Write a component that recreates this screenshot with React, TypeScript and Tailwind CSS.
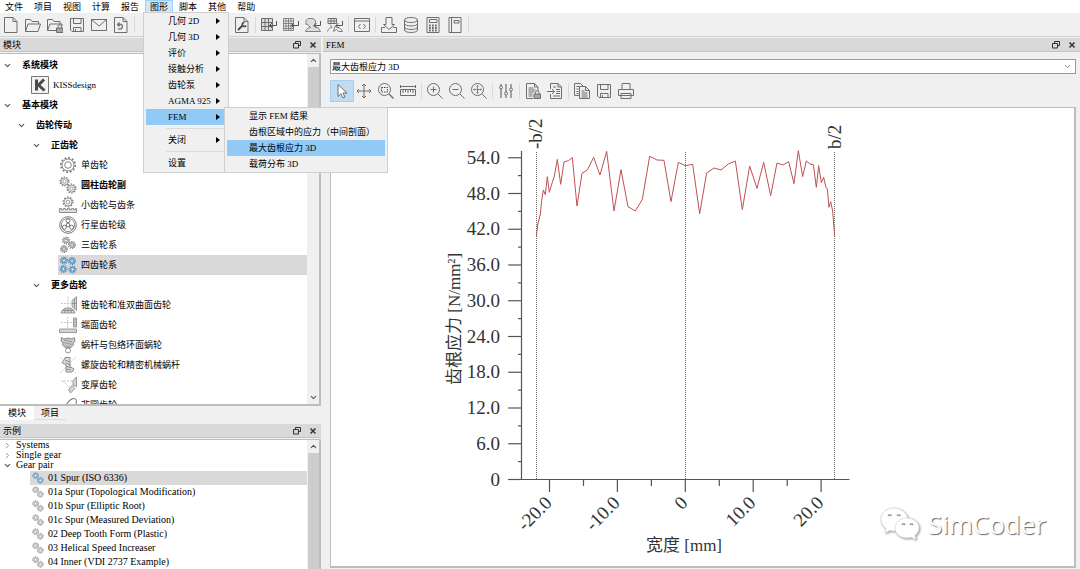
import React from 'react';
import { ChevronDown, ChevronRight, ChevronUp } from 'lucide-react';

const ICONS: Record<string, React.ReactNode> = {
  newFile: <path d="M1.500.5h8.500l4 4v11H1.500zM10 .5v4h4" />,
  open: <path d="M.5 14.500V2.500h5l1.500 2h6.500v2.500M.5 14.500h12.500l2.500-7.500H3z" />,
  openLock: (
    <>
      <path d="M9 13.500H.5V2.500h5l1.500 2h6v2.500M.5 13.500L3 7h12v2" />
      <path d="M11 11V9.500a1.500 1.500 0 0 1 3.500 0V11" />
      <path d="M9.500 11h6.500v4.500H9.500z" fill="#a5a5a5" />
    </>
  ),
  save: <path d="M1.500 1.500h13v13H3l-1.500-1.500zM4.500 1.500v5h7.500v-5M4.500 14.500v-4h7.500v4M6.500 12v2" />,
  mail: <path d="M.5 2.500h15v11H.5zM.5 2.500L8 9l7.500-6.500" />,
  reload: (
    <>
      <path d="M1.500.5h8.500l4 4v11H1.500zM10 .5v4h4" />
      <path d="M4.500 7.500h4a2.500 2.500 0 1 1-3.500 4M6.500 5.500L4.500 7.500l2 2" strokeWidth="1.300" />
    </>
  ),
  wrench: (
    <>
      <path d="M1.500.5h8.500l4 4v11H1.500zM10 .5v4h4" />
      <path d="M4 13l4.500-4.500" strokeWidth="2" stroke="#4a4a4a" />
      <path d="M10.500 5.500a2 2 0 1 0 1.500 3" strokeWidth="1.700" stroke="#4a4a4a" />
    </>
  ),
  grid: (
    <>
      <path d="M.5 1.500h11v12H.5zM.5 5.500h11M.5 9.500h11M4 1.500v12M7.500 1.500v12" fill="#dadada" />
      <path d="M15.500 4v4.500H8.500M11 6L8.500 8.500 11 11" stroke="#555" />
    </>
  ),
  gridFine: (
    <>
      <path d="M.5 1.500h10v12H.5zM.5 4h10M.5 6.500h10M.5 9h10M.5 11.500h10M3 1.500v12M5.500 1.500v12M8 1.500v12" strokeWidth="0.8" />
      <path d="M15.500 4v4.500H8.500M11 6L8.500 8.500 11 11" stroke="#555" />
    </>
  ),
  gearMesh: (
    <>
      <path d="M.5 14.500c1-3 2.500-4 5-4l-3-3H1v-4l2-2h5l2.500 2V6L9 9.500l4 1 2.500 4z" fill="#dcdcdc" stroke="#808080" />
      <path d="M15.500 4v4.500H9M11.500 6L9 8.500l2.500 2.500" stroke="#555" />
    </>
  ),
  gridMesh: (
    <>
      <path d="M1 1.500h8.500v5H1zM1 4h8.500M4 1.500v5M7 1.500v5" />
      <path d="M.5 14.500c1-3 2.500-4 4.500-4l-2-3M8 9l2 1.500c3 0 4.500 1.500 5.500 4h-4l-2-2-3 2z" stroke="#808080" />
      <path d="M15.500 4v4.500H9M11.500 6L9 8.500l2.500 2.500" stroke="#555" />
    </>
  ),
  code: <path d="M.5 1.500h15v13H.5zM.5 4h15M6.500 7L4.500 9.500l2 2.500M9.500 7l2 2.500-2 2.500" />,
  importBox: <path d="M5 .5h6v7h2.500L8 12.500 2.500 7.500H5zM4 10.500H.5v5h15v-5H12" />,
  database: (
    <path d="M1.500 3c0-3.300 13-3.300 13 0v10c0 3.300-13 3.300-13 0zM1.500 3c0 3.300 13 3.300 13 0M1.500 6.500c0 3.300 13 3.300 13 0M1.500 10c0 3.300 13 3.300 13 0" />
  ),
  calculator: (
    <>
      <path d="M2 .5h12v15H2z" />
      <path d="M4.500 2.500h7.500v3H4.500z" />
      <path d="M4 8.500h8M4 11h8M4 13.500h8" strokeWidth="1.800" strokeDasharray="1.800 1.200" />
    </>
  ),
  book: <path d="M2 .5h12v15H2zM4.500.5v15M7 3.500h5v2.500H7z" />,
  cursor: <path d="M4 1.500v12l3-2.800 2 4.300 2-1-2-4h4z" fill="#fff" />,
  move: <path d="M8 1v14M1 8h14M6 3l2-2 2 2M6 13l2 2 2-2M3 6L1 8l2 2M13 6l2 2-2 2" />,
  zoomBox: (
    <>
      <circle cx="6.500" cy="6.500" r="6" />
      <path d="M11 11l4.500 4.500" strokeWidth="1.400" />
      <path d="M3.500 4.500h6v4.500h-6z" strokeDasharray="1.500 1" stroke="#444" />
    </>
  ),
  ruler: <path d="M.5 2v3M15.500 2v3M.5 3.500h15M.5 6.500h15v6H.5zM3 7v3M5.500 7v2M8 7v3M10.500 7v2M13 7v3" />,
  zoomIn: <path d="M11 11l4.500 4.500M3.500 6.500h6M6.500 3.500v6M12.500 6.500a6 6 0 1 1-12 0 6 6 0 0 1 12 0z" />,
  zoomOut: <path d="M11 11l4.500 4.500M3.500 6.500h6M12.500 6.500a6 6 0 1 1-12 0 6 6 0 0 1 12 0z" />,
  zoomFit: (
    <>
      <path d="M11 11l4.500 4.500M12.500 6.500a6 6 0 1 1-12 0 6 6 0 0 1 12 0z" />
      <path d="M2.500 6.500h8M6.500 2.500v8M5.500 3.500l1-1 1 1M5.500 9.500l1 1 1-1M3.500 5.500l-1 1 1 1M9.500 5.500l1 1-1 1" strokeWidth="0.8" />
    </>
  ),
  sliders: (
    <>
      <path d="M3 1v2M3 6v9M8 1v8M8 12v3M13 1v4M13 8v7" strokeWidth="1.200" />
      <circle cx="3" cy="4.500" r="1.500" />
      <circle cx="8" cy="10.500" r="1.500" />
      <circle cx="13" cy="6.500" r="1.500" />
    </>
  ),
  docLock: (
    <>
      <path d="M8 15.500H1.500V.5h8l3.500 3.500v4M9.500.5v3.500h3.500M3.500 5h5M3.500 7h7M3.500 9h6M3.500 11h4M3.500 13h4" />
      <path d="M10.500 11V9.500a1.600 1.600 0 0 1 3.500 0V11" />
      <path d="M9 11h6.500v4.500H9z" fill="#a5a5a5" />
    </>
  ),
  docImport: (
    <path d="M3.500 6V.5h7.500l3.500 3.500v11.500h-11V11M11 .5v3.500h3.500M0 8.500h7M5 6l2.500 2.500L5 11M6 4h3M9 6.500h4M9.500 8.500h3.500M9 10.500h4M6 13h7" />
  ),
  copy: (
    <path d="M5 12.500H.5V.5h6L9 3M2.500 3.500h3M2.500 6h2M2.500 8.500h2M2.500 10.500h2M5.500 3.500h6l4 4v8h-10zM11.500 3.500v4h4M7.500 8h3M7.500 10h6M7.500 12h6M7.500 14h6" />
  ),
  print: <path d="M4 6.500V.5h8v6M.5 6.500h15v6H.5zM3 10.500h10v5H3z" />,
};

const Icon = ({ name }: { name: string }) => (
  <svg viewBox="0 0 16 16" className="h-4 w-4" fill="none" stroke="#6e6e6e" aria-hidden="true">
    {ICONS[name]}
  </svg>
);

const Tool = ({ name, active = false }: { name: string; active?: boolean }) => (
  <button
    type="button"
    aria-label={name}
    className={`flex h-5 w-[22px] shrink-0 items-center justify-center ${active ? 'bg-[#c0dcf3] outline outline-[#a6d0f2]' : ''}`}
  >
    <Icon name={name} />
  </button>
);

const Divider = () => <div className="mx-[2px] h-4 w-px shrink-0 bg-[#d9d9d9]" />;

// A single toothed wheel, dashes on the outer ring make the teeth
const Wheel = ({ x, y, r, color = '#7d7d7d' }: { x: number; y: number; r: number; color?: string }) => (
  <g stroke={color} fill="none">
    <circle cx={x} cy={y} r={r - 1.5} strokeWidth="0.8" fill={color === '#7d7d7d' ? '#fff' : '#a9cbe6'} />
    <circle cx={x} cy={y} r={r - 0.6} strokeWidth="1.300" strokeDasharray={`${(r - 0.6) * 0.314} ${(r - 0.6) * 0.314}`} />
    <circle cx={x} cy={y} r={r * 0.35} strokeWidth="0.8" fill="#fff" />
  </g>
);

const BLUE = '#4f87b3';

const GEARS: Record<string, React.ReactNode> = {
  single: (
    <g fill="none" stroke="#777">
      <circle cx="9" cy="9" r="6" strokeWidth="0.9" />
      <circle cx="9" cy="9" r="7.200" strokeWidth="1.600" strokeDasharray="1.880 1.890" />
      <circle cx="9" cy="9" r="3.300" strokeWidth="0.9" />
    </g>
  ),
  pair: (
    <>
      <Wheel x={5.5} y={5.500} r={5} />
      <Wheel x={12.5} y={12.500} r={5} />
    </>
  ),
  pairBlue: (
    <>
      <Wheel x={5.5} y={5.500} r={5} color={BLUE} />
      <Wheel x={12.5} y={12.500} r={5} color={BLUE} />
    </>
  ),
  rack: (
    <>
      <Wheel x={9} y={6} r={5.500} />
      <path d="M.5 12.500h2v1h2v-1h2v1h2v-1h2v1h2v-1h2v1h2v-1h1v4H.5z" fill="#ddd" stroke="#777" strokeWidth="0.8" />
    </>
  ),
  planet: (
    <g fill="none" stroke="#777">
      <circle cx="9" cy="9" r="8.300" />
      <circle cx="9" cy="9" r="6.600" strokeWidth="0.8" />
      <circle cx="9" cy="9" r="1.800" />
      <circle cx="9" cy="4.800" r="2" />
      <circle cx="5.400" cy="11.200" r="2" />
      <circle cx="12.600" cy="11.200" r="2" />
    </g>
  ),
  three: (
    <>
      <Wheel x={7} y={4.500} r={4} />
      <Wheel x={5} y={13} r={4} />
      <Wheel x={13} y={9} r={4} />
    </>
  ),
  four: (
    <>
      <Wheel x={5} y={4.500} r={4} color={BLUE} />
      <Wheel x={13} y={5} r={4} color={BLUE} />
      <Wheel x={4.5} y={13} r={4} color={BLUE} />
      <Wheel x={13.500} y={13.500} r={4} color={BLUE} />
    </>
  ),
  bevel: (
    <g fill="#d4d4d4" stroke="#888" strokeWidth="0.8">
      <path d="M2 17l1-2.500L6.500 12h5l3.500 2.500L16 17zM3 14.500h12M6.500 12L5.500 17M11.500 12l1 5M9 12v5" />
      <path d="M17.500.5v14L13 10.500v-6zM15.500 2.500v10M13 7.500h4.500" />
      <path d="M9 .5v11M2 7.500h10" strokeDasharray="2 1" stroke="#bbb" />
    </g>
  ),
  face: (
    <g fill="#d4d4d4" stroke="#888" strokeWidth="0.8">
      <path d="M.5 13h17v3.500H.5zM14.500 2h3v9h-3zM14.500 4h3M14.500 6.500h3M14.500 9h3" />
      <path d="M8.500 1v11M2 6.500h11" strokeDasharray="2 1" stroke="#bbb" />
    </g>
  ),
  worm: (
    <g fill="#c9c9c9" stroke="#777" strokeWidth="0.8">
      <path d="M2.500 1.500l2.500 1.500 4-1 4 1 2.500-1.500L16 5l-2 2 .5 2-3 3h-5l-3-3 .5-2-2-2z" />
      <path d="M5 4l8 2M4.500 6.500l8.500 2M5.500 9.500l6 1.500" stroke="#777" strokeWidth="0.6" />
      <circle cx="9" cy="14.500" r="2.500" fill="#fff" />
    </g>
  ),
  crossed: (
    <g fill="#dcdcdc" stroke="#777" strokeWidth="0.8">
      <path d="M1 1l16 16M1 17L17 1" stroke="#bbb" strokeDasharray="2 1" />
      <path d="M6 1.500h5v9l4 2.500-2 3H7V9L3 6.500 5 4zM6 4l5 2M6.500 7l5 2M7 10l5 2M7 13l5 1" />
    </g>
  ),
  beveloid: (
    <g fill="#d4d4d4" stroke="#888" strokeWidth="0.8">
      <path d="M17.500 1v9.500L14 9V4.500zM13 9.500l3 3-4.500 4.500-2-3z" />
      <path d="M2 5h11M4 5l7 7" strokeDasharray="2 1" stroke="#bbb" />
    </g>
  ),
  oval: <ellipse cx="12" cy="9" rx="4" ry="7.500" transform="rotate(35 12 9)" fill="none" stroke="#777" />,
};

const GearIcon = ({ name, small = false }: { name: string; small?: boolean }) => (
  <svg viewBox="0 0 18 18" className={`shrink-0 ${small ? 'h-3 w-3' : 'h-[18px] w-[18px]'}`} aria-hidden="true">
    {GEARS[name]}
  </svg>
);

const PanelTitle = ({ title }: { title: string }) => (
  <div className="flex h-[14px] shrink-0 items-center border-b border-[#c4c4c4] bg-[#d9d9d9] pr-1 pl-[3px]">
    <h2 className="flex-1 text-[9px] font-normal">{title}</h2>
    <button type="button" aria-label="Float" className="mr-2 flex h-3 w-2 items-center">
      <svg viewBox="0 0 8 8" className="h-2 w-2" fill="none" stroke="#333">
        <path d="M2.500 2.500v-2h5v4h-2M.5 2.500h5v4.500H.5z" />
      </svg>
    </button>
    <button type="button" aria-label="Close" className="flex h-3 w-2 items-center">
      <svg viewBox="0 0 8 8" className="h-2 w-2" stroke="#333" strokeWidth="1.500">
        <path d="M1.500 1.500l5 5M6.500 1.500l-5 5" />
      </svg>
    </button>
  </div>
);

const menus = ['文件', '项目', '视图', '计算', '报告', '图形', '脚本', '其他', '帮助'];
const graphicItems = ['几何 2D', '几何 3D', '评价', '接触分析', '齿轮泵', 'AGMA 925', 'FEM'];
const femItems = ['显示 FEM 结果', '齿根区域中的应力（中间剖面）', '最大齿根应力 3D', '载荷分布 3D'];

const Arrow = () => (
  <svg viewBox="0 0 4 6" className="h-[6px] w-1" aria-hidden="true">
    <path d="M0 0l4 3-4 3z" fill="#000" />
  </svg>
);

const MenuRow = ({ label, arrow = false, active = false }: { label: string; arrow?: boolean; active?: boolean }) => (
  <button
    type="button"
    role="menuitem"
    className={`flex h-4 w-full items-center justify-between pr-[6px] pl-[22px] whitespace-nowrap ${active ? 'bg-[#91c9f7]' : ''}`}
  >
    <span>{label}</span>
    {arrow && <Arrow />}
  </button>
);

const GraphicMenu = () => (
  <div role="menu" className="absolute top-[12px] -left-[2px] z-20 w-[86px] border border-[#cfcfcf] bg-[#f0f0f0] px-[2px] pb-px">
    {graphicItems.map((label) => (
      <MenuRow key={label} label={label} arrow active={label === 'FEM'} />
    ))}
    <div className="my-[3px] ml-5 h-px bg-[#dcdcdc]" />
    <MenuRow label="关闭" arrow />
    <div className="my-[3px] ml-5 h-px bg-[#dcdcdc]" />
    <MenuRow label="设置" />
    <div role="menu" className="absolute top-[94px] left-[80px] w-[164px] border border-[#cfcfcf] bg-[#f0f0f0] px-[2px]">
      {femItems.map((label) => (
        <MenuRow key={label} label={label} active={label === '最大齿根应力 3D'} />
      ))}
    </div>
  </div>
);

const MenuBar = () => (
  <nav className="flex h-[13px] shrink-0 gap-px bg-white">
    {menus.map((label) => (
      <div key={label} className="relative">
        <button
          type="button"
          className={`flex h-[13px] items-center px-[5px] ${label === '图形' ? 'bg-[#cce8ff] outline outline-[#99d1ff] -outline-offset-1' : ''}`}
        >
          {label}
        </button>
        {label === '图形' && <GraphicMenu />}
      </div>
    ))}
  </nav>
);

const MainToolbar = () => (
  <div className="flex h-6 shrink-0 items-center border-b border-[#cfcfcf] bg-[#f0f0f0]">
    {['newFile', 'open', 'openLock', 'save', 'mail', 'reload'].map((n) => <Tool key={n} name={n} />)}
    <Divider />
    <div className="w-[94px] shrink-0" />
    <Tool name="wrench" />
    <Divider />
    {['grid', 'gridFine', 'gearMesh', 'gridMesh'].map((n) => <Tool key={n} name={n} />)}
    <Divider />
    <Tool name="code" />
    <Divider />
    {['importBox', 'database', 'calculator', 'book'].map((n) => <Tool key={n} name={n} />)}
    <Divider />
  </div>
);

type Node = { label: string; level: number; icon?: string; bold?: boolean; selected?: boolean };

const modules: Node[] = [
  { label: '系统模块', level: 0 },
  { label: 'KISSdesign', level: 1, icon: 'kiss' },
  { label: '基本模块', level: 0 },
  { label: '齿轮传动', level: 1 },
  { label: '正齿轮', level: 2 },
  { label: '单齿轮', level: 3, icon: 'single' },
  { label: '圆柱齿轮副', level: 3, icon: 'pair', bold: true },
  { label: '小齿轮与齿条', level: 3, icon: 'rack' },
  { label: '行星齿轮级', level: 3, icon: 'planet' },
  { label: '三齿轮系', level: 3, icon: 'three' },
  { label: '四齿轮系', level: 3, icon: 'four', selected: true },
  { label: '更多齿轮', level: 2 },
  { label: '锥齿轮和准双曲面齿轮', level: 3, icon: 'bevel' },
  { label: '端面齿轮', level: 3, icon: 'face' },
  { label: '蜗杆与包络环面蜗轮', level: 3, icon: 'worm' },
  { label: '螺旋齿轮和精密机械蜗杆', level: 3, icon: 'crossed' },
  { label: '变厚齿轮', level: 3, icon: 'beveloid' },
  { label: '非圆齿轮', level: 3, icon: 'oval' },
];

const INDENT = ['pl-[3px]', 'pl-[17px]', 'pl-[32px]', 'pl-[58px]'];

const TreeRow = ({ node }: { node: Node }) => {
  if (node.icon) {
    return (
      <li className={node.level === 1 ? 'pl-[30px]' : INDENT[3]}>
        <button
          type="button"
          className={`flex h-5 w-full items-center gap-1 pl-px text-left whitespace-nowrap ${node.selected ? 'bg-[#d9d9d9]' : ''} ${node.bold ? 'font-bold' : ''}`}
        >
          {node.icon === 'kiss' ? (
            <svg viewBox="0 0 18 18" className="h-[18px] w-[18px]" aria-hidden="true">
              <path d="M.5.5h17v17H.5z" fill="#f2f2f2" stroke="#777" />
              <path d="M5.500 3.500v11M13 3.500L7.500 9l6 5.500" fill="none" stroke="#4a4a4a" strokeWidth="3" />
            </svg>
          ) : (
            <GearIcon name={node.icon} />
          )}
          {node.label}
        </button>
      </li>
    );
  }
  return (
    <li className={INDENT[node.level]}>
      <button type="button" className="flex h-5 items-center gap-[10px] font-bold whitespace-nowrap">
        <ChevronDown size={9} strokeWidth={3} color="#555" />
        {node.label}
      </button>
    </li>
  );
};

const ScrollBar = ({ thumb, down = false }: { thumb: string; down?: boolean }) => (
  <div className="flex w-3 shrink-0 flex-col items-center bg-[#f0f0f0]">
    <ChevronUp size={9} strokeWidth={3} color="#555" className="my-[2px] shrink-0" />
    <div className={`w-[11px] bg-[#cdcdcd] ${thumb}`} />
    {down && <ChevronDown size={9} strokeWidth={3} color="#555" className="mt-auto mb-[2px] shrink-0" />}
  </div>
);

const examples = [
  '01 Spur (ISO 6336)',
  '01a Spur (Topological Modification)',
  '01b Spur (Elliptic Root)',
  '01c Spur (Measured Deviation)',
  '02 Deep Tooth Form (Plastic)',
  '03 Helical Speed Increaser',
  '04 Inner (VDI 2737 Example)',
];

const Sidebar = () => (
  <aside className="flex w-[321px] shrink-0 flex-col">
    <section className="flex min-h-0 flex-[368] flex-col">
      <PanelTitle title="模块" />
      <div className="mt-px flex min-h-0 flex-1 border-r-2 border-b-2 border-t border-[#bdbdbd] bg-white">
        <ul className="min-w-0 flex-1 overflow-hidden pt-px">
          {modules.map((n) => <TreeRow key={n.label} node={n} />)}
        </ul>
        <ScrollBar thumb="h-[75px]" down />
      </div>
    </section>
    <div className="flex h-[18px] shrink-0 items-start">
      <button type="button" className="h-[14px] bg-white px-2">模块</button>
      <button type="button" className="h-[14px] border-b border-[#dcdcdc] px-[7px]">项目</button>
    </div>
    <section className="flex min-h-0 flex-[145] flex-col">
      <PanelTitle title="示例" />
      <div className="mt-px flex min-h-0 flex-1 border-t border-r-2 border-[#bdbdbd] bg-white">
        <div className="min-w-0 flex-1 overflow-hidden text-[10px]">
          {['Systems', 'Single gear', 'Gear pair'].map((label) => (
            <button key={label} type="button" className="flex h-[10px] items-center gap-1 pl-[3px] leading-[10px]">
              {label === 'Gear pair'
                ? <ChevronDown size={9} strokeWidth={3} color="#555" />
                : <ChevronRight size={9} strokeWidth={2} color="#777" />}
              {label}
            </button>
          ))}
          <ul className="pl-[30px] pt-px">
            {examples.map((label, i) => (
              <li key={label}>
                <button
                  type="button"
                  className={`flex h-[14px] w-full items-center gap-1 pl-[2px] text-left whitespace-nowrap ${i === 0 ? 'bg-[#d9d9d9]' : ''}`}
                >
                  <GearIcon name={i === 0 ? 'pairBlue' : 'pair'} small />
                  {label}
                </button>
              </li>
            ))}
          </ul>
        </div>
        <ScrollBar thumb="flex-1" />
      </div>
    </section>
  </aside>
);

const CURVE =
  '49,380 53,345 61,312 65,272 70,240 76,254 82,200 88,247 97,217 103,198 112,148 122,223 132,156 145,152 157,143 171,288 186,190 202,180 221,142 240,195 260,124 282,303 303,179 324,290 346,303 367,268 389,139 411,150 432,151 453,275 475,157 496,167 518,163 539,311 560,189 582,174 603,180 625,162 646,153 667,299 689,168 711,235 731,157 752,257 771,159 789,165 806,155 822,221 835,122 848,200 859,153 870,162 880,164 889,232 896,167 904,218 911,202 918,232 922,237 927,292 932,275 938,303 944,378';

const yTicks = ['0', '6.0', '12.0', '18.0', '24.0', '30.0', '36.0', '42.0', '48.0', '54.0'];
const xTicks = ['-20.0', '-10.0', '0', '10.0', '20.0'];

const StressChart = () => (
  <svg viewBox="331 108 743 458" className="h-full w-full" role="img" aria-label="最大齿根应力 3D">
    <g stroke="#555" strokeWidth="1.200">
      <path d="M521.500 151v328.500M508 479.500h341.500" fill="none" />
      {yTicks.map((t, i) => (
        <g key={t}>
          <path d={`M508 ${479.5 - i * 35.75}h13`} />
          {i < 9 && <path d={`M518 ${461.6 - i * 35.75}h3`} />}
        </g>
      ))}
      {xTicks.map((t, i) => (
        <g key={t}>
          <path d={`M${549.5 + i * 67.9} 479v13`} />
          {i < 4 && <path d={`M${583.5 + i * 67.9} 479v7`} />}
        </g>
      ))}
    </g>
    <g stroke="#666" strokeDasharray="1 1">
      <path d="M536.500 152v327M685.500 152v327M834.500 152v327" />
    </g>
    <g transform="translate(520 110) scale(0.33333)">
      <polyline points={CURVE} fill="none" stroke="#bf5050" strokeWidth="3" />
    </g>
    <g fontSize="19" fill="#333">
      {yTicks.map((t, i) => (
        <text key={t} x="500" y={485.5 - i * 35.75} textAnchor="end">{t}</text>
      ))}
      {xTicks.map((t, i) => (
        <text key={t} textAnchor="end" transform={`translate(${553 + i * 67.9} 504) rotate(-45)`}>{t}</text>
      ))}
      <text transform="translate(542 149) rotate(-90)">-b/2</text>
      <text transform="translate(841 149) rotate(-90)">b/2</text>
      <text transform="translate(460 385) rotate(-90)" fontSize="17">齿根应力 [N/mm²]</text>
      <text x="646" y="551" fontSize="17">宽度 [mm]</text>
    </g>
  </svg>
);

const Watermark = () => (
  <div className="absolute right-7 bottom-6 flex items-center gap-2">
    <svg viewBox="0 0 40 36" className="h-9 w-10 drop-shadow-[1px_1px_1px_#999]" fill="#fff" stroke="#ccc" strokeWidth="0.6" aria-hidden="true">
      <path d="M14 2C6.500 2 1 7 1 13.500c0 4 2 7 5 9L5 27l5-2.500c1.500.5 3 .5 5 .5 8-.5 13-5 13-11S21.500 2 14 2z" />
      <path d="M27 12c-7 0-12 4.500-12 10s5 10 12 10c1.500 0 3-.2 4.500-.7L36 34l-1-4.500c2.500-2 4-4.500 4-7.500 0-5.500-5-10-12-10z" />
      <path d="M8 10a2 2 0 0 1 3.500 0M17 10a2 2 0 0 1 3.500 0M22 19a1.600 1.600 0 0 1 3 0M30 19a1.600 1.600 0 0 1 3 0" fill="none" stroke="#888" strokeWidth="1.200" />
    </svg>
    <span className="font-['Open_Sans',sans-serif] text-[26px] leading-8 text-white [text-shadow:1px_1px_1px_#666]">SimCoder</span>
  </div>
);

const FemPanel = () => (
  <main className="flex min-w-0 flex-1 flex-col">
    <PanelTitle title="FEM" />
    <div className="flex min-h-0 flex-1 flex-col pt-[7px] pr-1 pb-px pl-[7px]">
      <div className="relative shrink-0">
        <select aria-label="结果" className="block h-[15px] w-full appearance-none border border-[#999] bg-white px-px text-[9px] leading-3">
          <option>最大齿根应力 3D</option>
        </select>
        <ChevronDown size={9} color="#555" className="pointer-events-none absolute top-[3px] right-1" />
      </div>
      <div className="flex h-[33px] shrink-0 items-center pl-px">
        <Tool name="cursor" active />
        {['move', 'zoomBox', 'ruler'].map((n) => <Tool key={n} name={n} />)}
        <Divider />
        {['zoomIn', 'zoomOut', 'zoomFit'].map((n) => <Tool key={n} name={n} />)}
        <Divider />
        <Tool name="sliders" />
        <Divider />
        {['docLock', 'docImport'].map((n) => <Tool key={n} name={n} />)}
        <Divider />
        {['copy', 'save', 'print'].map((n) => <Tool key={n} name={n} />)}
      </div>
      <div className="relative min-h-0 flex-1 border border-r-2 border-b-2 border-[#bdbdbd] bg-white">
        <StressChart />
        <Watermark />
      </div>
    </div>
  </main>
);

export default function App() {
  return (
    <div className="flex h-screen flex-col overflow-hidden bg-[#f0f0f0] font-['Liberation_Serif','Noto_Sans_CJK_SC',serif] text-[9px] leading-3 text-black">
      <MenuBar />
      <MainToolbar />
      <div className="flex min-h-0 flex-1 gap-[2px] pt-px">
        <Sidebar />
        <FemPanel />
      </div>
    </div>
  );
}
